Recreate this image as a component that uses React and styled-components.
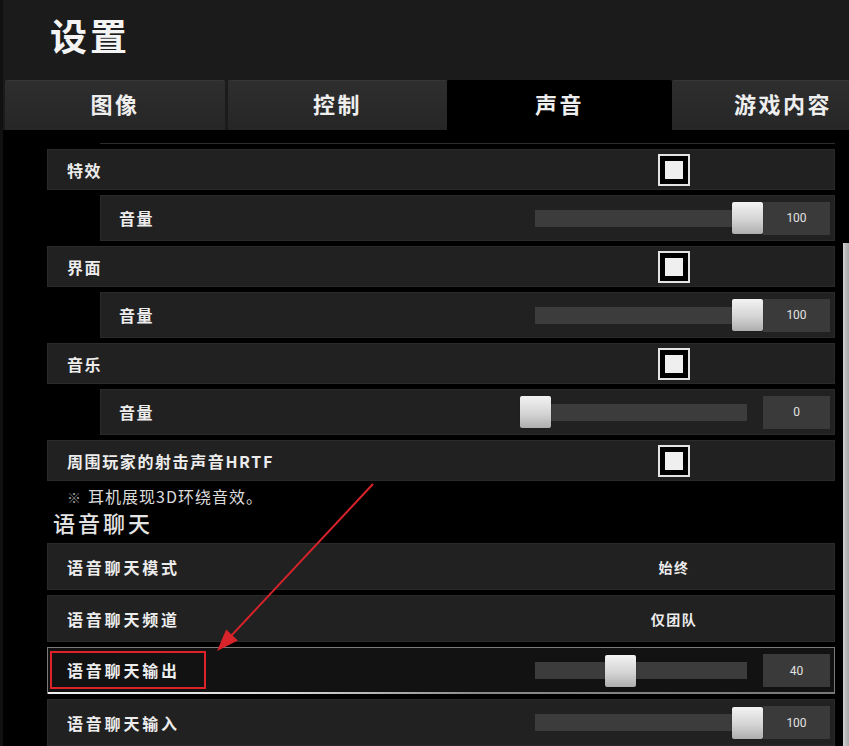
import React from "react";
import styled, { createGlobalStyle, css } from "styled-components";

const GlobalStyle = createGlobalStyle`
  html, body { margin: 0; padding: 0; background: #000; }
  body { font-family: "Noto Sans CJK SC", "Noto Sans", sans-serif; }
  * { box-sizing: border-box; }
`;

const Page = styled.div`
  position: relative;
  width: 849px;
  height: 746px;
  overflow: hidden;
  background: #000;
  border-left: 3px solid #121010;
  display: flex;
  flex-direction: column;
`;

const Header = styled.header`
  height: 80px;
  flex: 0 0 80px;
  background: #1b1b1b;
  padding: 11px 0 0 47px;
`;

const Title = styled.h1`
  margin: 0;
  font-size: 37px;
  line-height: 48px;
  font-weight: 700;
  letter-spacing: 3px;
  color: #f4f4f4;
`;

const TabBar = styled.nav`
  display: flex;
  height: 50px;
  flex: 0 0 50px;
  background: #1b1b1b;
  padding-left: 2px;
`;

const Tab = styled.div`
  flex: 0 0 ${(p) => p.$w}px;
  margin-left: ${(p) => p.$gap}px;
  display: flex;
  align-items: center;
  justify-content: center;
  padding-bottom: 5px;
  font-size: 22px;
  font-weight: 700;
  letter-spacing: 2.5px;
  color: #eeeeee;
  border-radius: 2px 2px 0 0;
  ${(p) =>
    p.$active
      ? css`
          background: #000;
        `
      : css`
          background: linear-gradient(#2e2e2e, #262626);
          border-top: 1px solid #363636;
        `}
`;

const Content = styled.div`
  flex: 1;
  display: flex;
  min-height: 0;
`;

const List = styled.div`
  width: 832px;
  padding: 13px 0 0 44px;
  display: flex;
  flex-direction: column;
  gap: 5px;
`;

const StubRow = styled.div`
  height: 3px;
  margin-left: 53px;
  background: #2c2c2c;
`;

const Row = styled.div`
  position: relative;
  flex: 0 0 ${(p) => (p.$kind === "main" ? 41 : p.$kind === "sub" ? 46 : 47)}px;
  margin-left: ${(p) => (p.$kind === "sub" ? 53 : 0)}px;
  display: flex;
  align-items: center;
  background: #212121;
  border: 1px solid #2a2a2a;
  ${(p) =>
    p.$active &&
    css`
      background: #121212;
      border: 1px solid #7a7a7a;
      &::after {
        content: "";
        position: absolute;
        left: 0;
        right: 0;
        bottom: -1px;
        height: 2px;
        background: linear-gradient(to right, #f2f2f2, #d8d8d8 30%, #8a8a8a 55%, #777 100%);
      }
    `}
`;

const Label = styled.span`
  flex: 1;
  padding-left: ${(p) => (p.$kind === "sub" ? 18 : 19)}px;
  font-size: 16px;
  font-weight: 700;
  letter-spacing: ${(p) => (p.$kind === "voice" ? 2.8 : 1.6)}px;
  color: #ececec;
  white-space: nowrap;
`;

const MarkedLabel = styled.span`
  display: flex;
  align-items: center;
  align-self: flex-start;
  margin: 3px 0 0 2px;
  width: 156px;
  height: 38px;
  padding-left: 15px;
  border: 2px solid #dd2329;
  font-size: 16px;
  font-weight: 700;
  letter-spacing: 2.8px;
  color: #ececec;
  white-space: nowrap;
`;

const Spacer = styled.div`
  flex: 1;
`;

const ControlCell = styled.div`
  width: 120px;
  margin-right: 100px;
  display: flex;
  justify-content: center;
  align-items: center;
  font-size: 14px;
  font-weight: 700;
  letter-spacing: 1.5px;
  color: #ececec;
`;

const Checkbox = styled.div`
  width: 32px;
  height: 32px;
  border: 2px solid #e4e4e4;
  background: #000;
  padding: 5px;
`;

const CheckFill = styled.div`
  width: 100%;
  height: 100%;
  background: #efefef;
`;

const Slider = styled.div`
  display: flex;
  align-items: center;
  margin-right: 4px;
`;

const Track = styled.div`
  position: relative;
  width: 212px;
  height: 17px;
  background: #3c3c3c;
  margin-right: 16px;
`;

const Thumb = styled.div`
  position: absolute;
  top: 50%;
  width: 31px;
  height: 32px;
  margin: -16px 0 0 -15px;
  border-radius: 2px;
  background: linear-gradient(#f3f3f3, #d4d4d4 55%, #aeaeae);
  box-shadow: 0 0 1px rgba(0, 0, 0, 0.6);
`;

const ValueBox = styled.div`
  width: 67px;
  height: 33px;
  background: #3a3a3a;
  display: flex;
  align-items: center;
  justify-content: center;
  font-family: Roboto, "Liberation Sans", sans-serif;
  font-size: 12px;
  color: #e2e2e2;
`;

const Note = styled.div`
  margin-top: -1px;
  padding-left: 20px;
  height: 22px;
  line-height: 22px;
  font-size: 16px;
  color: #dcdcdc;
  letter-spacing: 1px;
  white-space: nowrap;
`;

const NoteMark = styled.span`
  color: #9a9a9a;
  font-size: 14px;
  margin-right: 6px;
`;

const SectionTitle = styled.h2`
  margin: -5px 0 1px 6px;
  height: 30px;
  line-height: 30px;
  font-size: 22px;
  font-weight: 500;
  letter-spacing: 3px;
  color: #e4e4e4;
`;

const ScrollTrack = styled.div`
  margin-left: 8px;
  width: 6px;
  padding-top: 113px;
`;

const ScrollThumb = styled.div`
  height: 100%;
  background: linear-gradient(to right, #d6d6d6, #bdbdbd 40%, #a9a9a9);
`;

const Overlay = styled.svg`
  position: absolute;
  left: 0;
  top: 0;
  pointer-events: none;
`;

const tabs = [
  { label: "图像", w: 220, gap: 0 },
  { label: "控制", w: 219, gap: 3 },
  { label: "声音", w: 225, gap: 0, active: true },
  { label: "游戏内容", w: 222, gap: 0 },
];

const soundRows = [
  { kind: "main", label: "特效", check: true },
  { kind: "sub", label: "音量", value: 100 },
  { kind: "main", label: "界面", check: true },
  { kind: "sub", label: "音量", value: 100 },
  { kind: "main", label: "音乐", check: true },
  { kind: "sub", label: "音量", value: 0 },
  { kind: "main", label: "周围玩家的射击声音HRTF", check: true },
];

const voiceRows = [
  { kind: "voice", label: "语音聊天模式", text: "始终" },
  { kind: "voice", label: "语音聊天频道", text: "仅团队" },
  { kind: "voice", label: "语音聊天输出", value: 40, active: true, marked: true },
  { kind: "voice", label: "语音聊天输入", value: 100 },
];

function SliderControl({ value }) {
  return (
    <Slider>
      <Track>
        <Thumb style={{ left: `${value}%` }} />
      </Track>
      <ValueBox>{value}</ValueBox>
    </Slider>
  );
}

function SettingRow({ row }) {
  return (
    <Row $kind={row.kind} $active={row.active}>
      {row.marked ? (
        <>
          <MarkedLabel>{row.label}</MarkedLabel>
          <Spacer />
        </>
      ) : (
        <Label $kind={row.kind}>{row.label}</Label>
      )}
      {row.check && (
        <ControlCell>
          <Checkbox>
            <CheckFill />
          </Checkbox>
        </ControlCell>
      )}
      {row.text && <ControlCell>{row.text}</ControlCell>}
      {typeof row.value === "number" && <SliderControl value={row.value} />}
    </Row>
  );
}

function Arrow() {
  const sx = 370, sy = 484, tx = 214, ty = 651;
  const dx = tx - sx, dy = ty - sy;
  const len = Math.hypot(dx, dy);
  const ux = dx / len, uy = dy / len;
  const hl = 22, hw = 8;
  const bx = tx - ux * hl, by = ty - uy * hl;
  const px = -uy, py = ux;
  const pts = `${tx},${ty} ${bx + px * hw},${by + py * hw} ${bx - px * hw},${by - py * hw}`;
  return (
    <Overlay width="849" height="746" viewBox="0 0 849 746">
      <line x1={sx} y1={sy} x2={bx + ux * 2} y2={by + uy * 2} stroke="#d8232a" strokeWidth="2" />
      <polygon points={pts} fill="#d8232a" />
    </Overlay>
  );
}

export default function App() {
  return (
    <>
      <GlobalStyle />
      <Page>
        <Header>
          <Title>设置</Title>
        </Header>
        <TabBar>
          {tabs.map((t) => (
            <Tab key={t.label} $w={t.w} $gap={t.gap} $active={t.active}>
              {t.label}
            </Tab>
          ))}
        </TabBar>
        <Content>
          <List>
            <StubRow />
            {soundRows.map((r, i) => (
              <SettingRow key={"s" + i} row={r} />
            ))}
            <Note>
              <NoteMark>※</NoteMark>耳机展现3D环绕音效。
            </Note>
            <SectionTitle>语音聊天</SectionTitle>
            {voiceRows.map((r, i) => (
              <SettingRow key={"v" + i} row={r} />
            ))}
          </List>
          <ScrollTrack>
            <ScrollThumb />
          </ScrollTrack>
        </Content>
        <Arrow />
      </Page>
    </>
  );
}
